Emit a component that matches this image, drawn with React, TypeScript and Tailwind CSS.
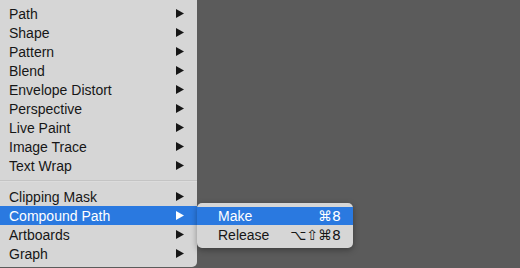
import React from 'react';

const topItems = ['Path', 'Shape', 'Pattern', 'Blend', 'Envelope Distort', 'Perspective', 'Live Paint', 'Image Trace', 'Text Wrap'];
const bottomItems = ['Clipping Mask', 'Compound Path', 'Artboards', 'Graph'];

const Arrow = ({ light }: { light?: boolean }) => (
  <svg width="8" height="9" viewBox="0 0 8 9" className={light ? 'fill-white' : 'fill-[#161616]'}>
    <polygon points="0,0 8,4.5 0,9" />
  </svg>
);

const Row = ({ label, active }: { label: string; active?: boolean }) => (
  <div
    className={`h-[19px] flex items-center justify-between pl-[9px] pr-[13px] ${
      active ? 'bg-[#2a79e0] text-white' : 'text-[#161616]'
    }`}
  >
    <span>{label}</span>
    <Arrow light={active} />
  </div>
);

export default function App() {
  return (
    <div
      className="w-[520px] h-[268px] bg-[#5b5b5b] relative overflow-hidden text-[14px] leading-none"
      style={{ fontFamily: '"Liberation Sans", Arial, sans-serif' }}
    >
      {/* Main menu */}
      <div className="w-[197px] h-[267px] bg-[#d6d6d6] rounded-br-[5px] pt-[4px]">
        {topItems.map((t) => (
          <Row key={t} label={t} />
        ))}
        <div className="h-[12px] flex items-center">
          <div className="w-full h-[2px] bg-[#c4c4c4] border-b border-[#dcdcdc]" />
        </div>
        {bottomItems.map((t) => (
          <Row key={t} label={t} active={t === 'Compound Path'} />
        ))}
      </div>

      {/* Submenu */}
      <div className="absolute left-[197px] top-[203px] w-[156px] h-[45px] bg-[#d6d6d6] rounded-[5px] py-[4px] shadow-[0_2px_6px_rgba(0,0,0,0.35)]">
        <div className="h-[18px] flex items-center justify-between pl-[21px] pr-[12px] bg-[#2a79e0] text-white">
          <span>Make</span>
          <span style={{ fontFamily: '"DejaVu Sans", sans-serif' }} className="text-[14px]">⌘8</span>
        </div>
        <div className="h-[19px] flex items-center justify-between pl-[21px] pr-[12px] text-[#161616]">
          <span>Release</span>
          <span style={{ fontFamily: '"DejaVu Sans", sans-serif' }} className="text-[14px]">⌥⇧⌘8</span>
        </div>
      </div>
    </div>
  );
}
